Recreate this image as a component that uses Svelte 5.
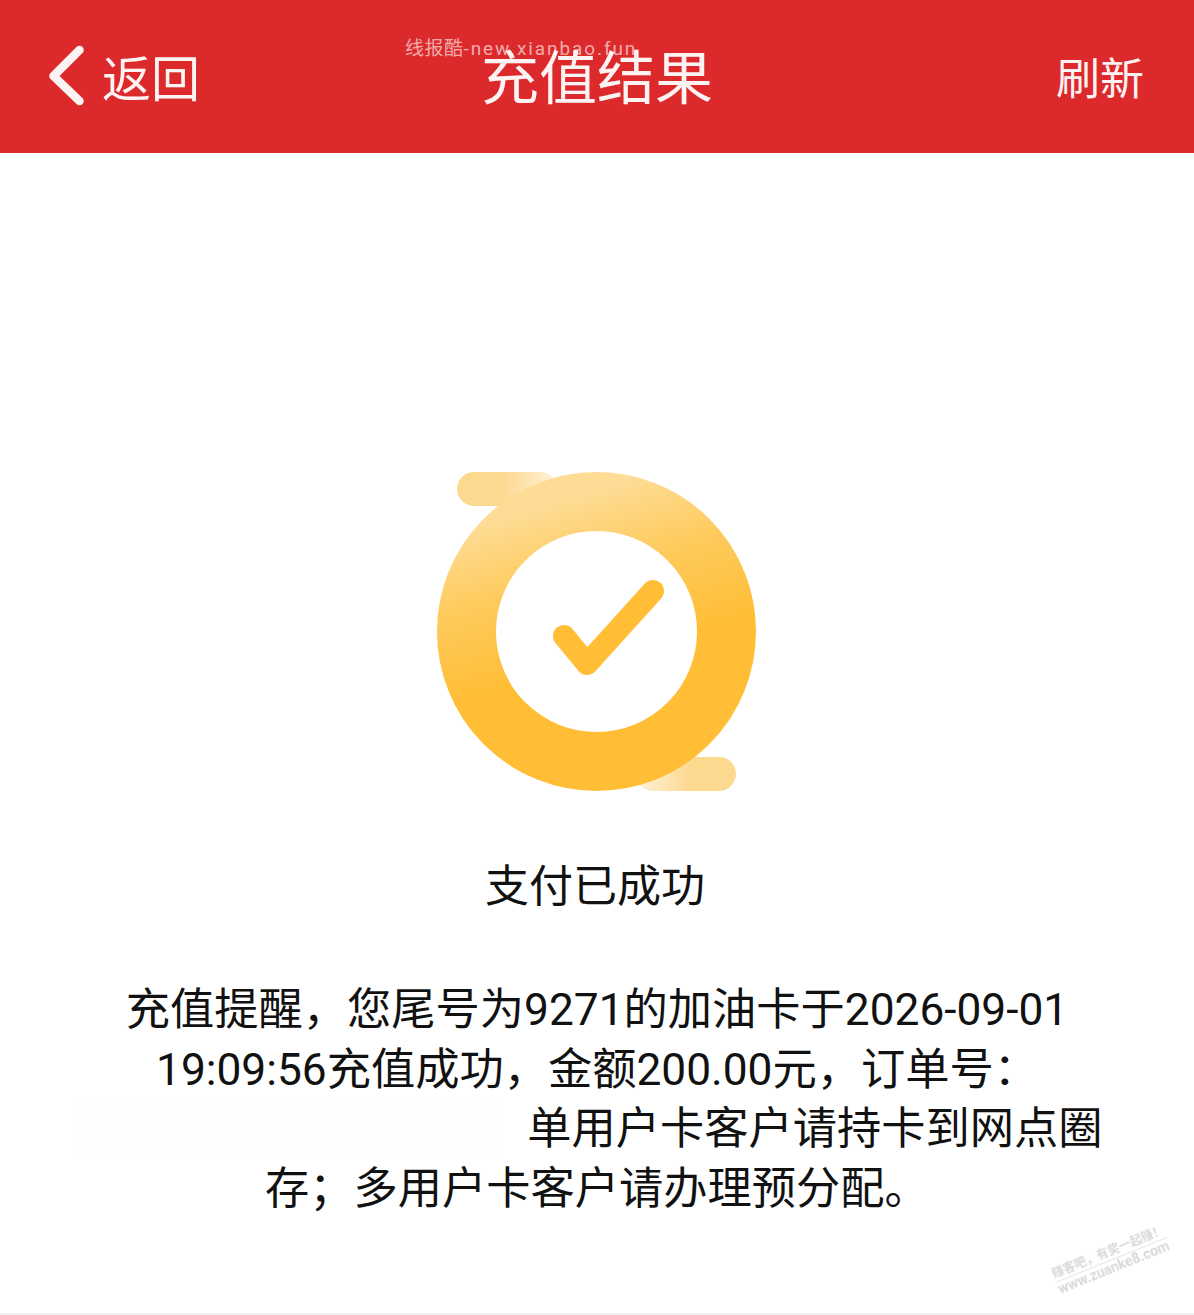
<script>
  const lines = [
    '充值提醒，您尾号为9271的加油卡于2026-09-01',
    '19:09:56充值成功，金额200.00元，订单号：'
  ];
  const lastLine = '存；多用户卡客户请办理预分配。';
</script>

<div class="page">
  <header class="topbar">
    <div class="back">
      <svg class="chevron" width="40" height="62" viewBox="0 0 40 62" aria-hidden="true">
        <path d="M32.500 5 L6.500 31 L32.500 56" fill="none" stroke="#fdf3f3" stroke-width="8.500" stroke-linecap="round" stroke-linejoin="round" />
      </svg>
      <span>返回</span>
    </div>
    <h1>充值结果</h1>
    <div class="refresh">刷新</div>
    <span class="mark-top"><span class="mark-cn">线报酷</span>-new.xianbao.fun</span>
  </header>

  <main class="content">
    <svg class="result-icon" width="320" height="320" viewBox="0 0 320 320" aria-hidden="true">
      <defs>
        <linearGradient id="ring" x1="0.36" y1="0" x2="0.54" y2="0.6">
          <stop offset="0" stop-color="#fedc95" />
          <stop offset="0.45" stop-color="#fecb5e" />
          <stop offset="1" stop-color="#ffbe36" />
        </linearGradient>
        <linearGradient id="pill-top" x1="0" y1="0" x2="1" y2="0">
          <stop offset="0" stop-color="#fdd88f" />
          <stop offset="0.45" stop-color="#fdd88f" />
          <stop offset="1" stop-color="#fff3da" />
        </linearGradient>
        <linearGradient id="pill-bottom" x1="0" y1="0" x2="1" y2="0">
          <stop offset="0" stop-color="#fff3da" />
          <stop offset="0.55" stop-color="#fdd88f" />
          <stop offset="1" stop-color="#fdd88f" />
        </linearGradient>
      </defs>
      <rect x="20" y="0" width="100" height="34" rx="17" fill="url(#pill-top)" />
      <rect x="199" y="285" width="100" height="34" rx="17" fill="url(#pill-bottom)" />
      <circle cx="159.500" cy="159.500" r="130" fill="none" stroke="url(#ring)" stroke-width="59" />
      <path d="M127 164 L150 192 L216 119" fill="none" stroke="#ffbe36" stroke-width="22" stroke-linecap="round" stroke-linejoin="round" />
    </svg>

    <p class="status">支付已成功</p>

    <div class="message">
      {#each lines as line}
        <div class="line">{line}</div>
      {/each}
      <div class="line shifted">
        <span class="redacted"></span>单用户卡客户请持卡到网点圈
      </div>
      <div class="line">{lastLine}</div>
    </div>
  </main>

  <div class="mark-bottom">
    <span>赚客吧，有奖一起赚！</span>
    <span class="url">www.zuanke8.com</span>
  </div>
</div>

<style>
  :global(body) {
    background: #fff;
  }

  .page {
    position: relative;
    height: 1315px;
    overflow: hidden;
    background: #fff;
    color: #111;
    font-family: Roboto, "Noto Sans CJK SC", sans-serif;
    border-bottom: 2px solid #efefef;
    box-sizing: border-box;
  }

  .topbar {
    position: relative;
    height: 153px;
    box-sizing: border-box;
    display: flex;
    align-items: center;
    justify-content: space-between;
    padding: 0 50px 2px 47px;
    background: #dc2a2c;
    color: #fdf3f3;
  }

  .back {
    display: flex;
    align-items: center;
    gap: 15px;
    font-size: 49px;
  }

  .chevron {
    flex: none;
  }

  h1 {
    position: absolute;
    left: 0;
    right: 0;
    top: 37px;
    margin: 0;
    text-align: center;
    font-size: 58px;
    line-height: 84px;
    font-weight: 400;
  }

  .refresh {
    font-size: 44px;
  }

  .mark-top {
    position: absolute;
    left: 405px;
    top: 38px;
    font-size: 19px;
    line-height: 22px;
    letter-spacing: 1.900px;
    color: rgba(255, 255, 255, 0.62);
  }

  .mark-cn {
    letter-spacing: 0.5px;
  }

  .content {
    display: flex;
    flex-direction: column;
    align-items: center;
    padding-top: 319px;
  }

  .result-icon {
    display: block;
  }

  .status {
    margin: 63px 4px 0 0;
    font-size: 44px;
    line-height: 64px;
  }

  .message {
    margin-top: 62px;
    font-size: 44.250px;
    line-height: 59.500px;
    text-align: center;
  }

  .line {
    white-space: nowrap;
  }

  .shifted {
    padding-right: 14px;
  }

  .redacted {
    display: inline-block;
    width: 424px;
    height: 54px;
    margin-right: 26px;
    vertical-align: middle;
    background: #fdfdfb;
    filter: blur(2px);
    transform: translateY(-4px);
  }

  .mark-bottom {
    position: absolute;
    left: 1050px;
    top: 1268px;
    display: flex;
    flex-direction: column;
    transform: rotate(-22deg);
    transform-origin: left top;
    color: #d8d8d8;
    font-size: 12px;
    font-weight: 700;
    line-height: 15px;
    white-space: nowrap;
    filter: blur(0.6px);
  }

  .mark-bottom .url {
    font-size: 14px;
    border-top: 1px solid #e4e4e4;
  }
</style>
